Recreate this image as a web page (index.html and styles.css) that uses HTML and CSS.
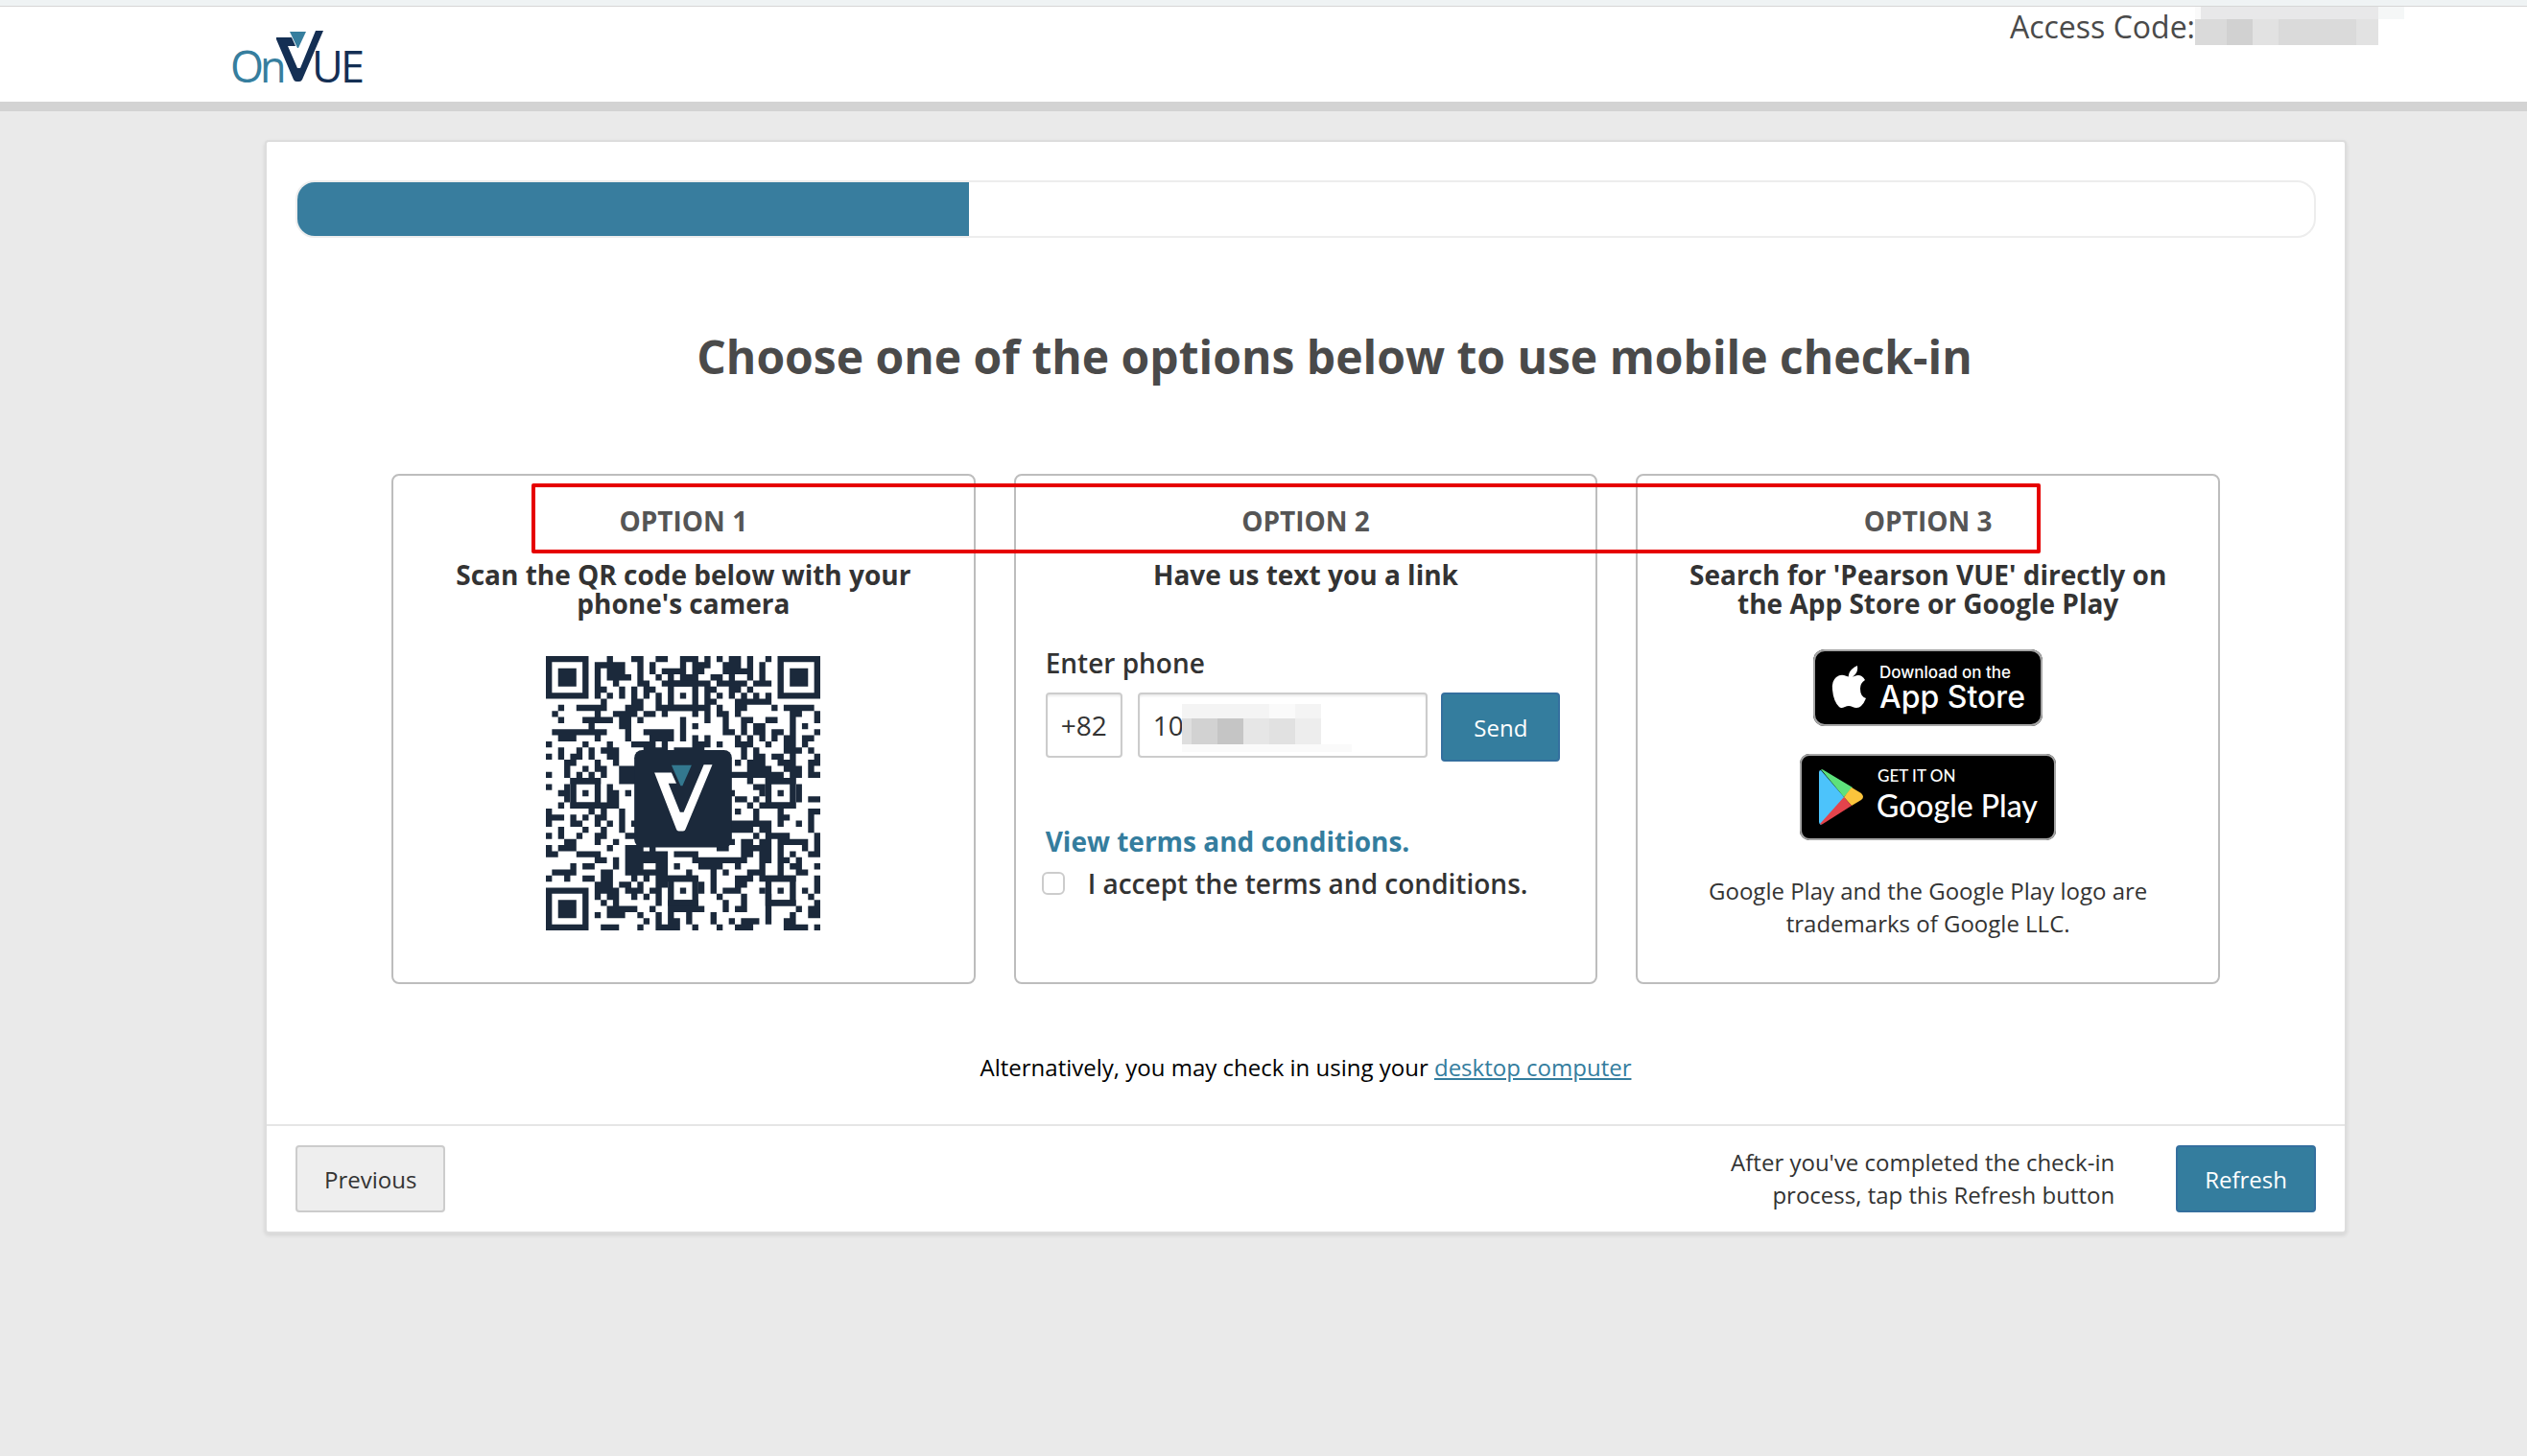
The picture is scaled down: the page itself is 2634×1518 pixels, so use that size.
FILE: index.html
```html
<!DOCTYPE html>
<html lang="en">
<head>
  <meta charset="UTF-8" />
  <meta name="viewport" content="width=device-width, initial-scale=1" />
  <title>OnVUE Check-in</title>
  <link rel="stylesheet" href="styles.css">
</head>
<body>
  <header class="header">
    <svg class="logo" viewBox="0 0 140 76" role="img" aria-label="OnVUE">
      <g class="logo-text">
        <text class="logo-on" x="-2" y="64">O</text>
        <text class="logo-on" x="29" y="64">n</text>
        <text x="83" y="64">U</text>
        <text x="113" y="64">E</text>
      </g>
      <path fill="#142f54" d="M46 17h16l4 9h-8l10 23h3L87 10h8L73 61q-1 2-3 2h-3q-2 0-3-2L46 19z" />
      <path fill="#367e9e" d="M60 11h17l-8 17h-1z" />
    </svg>
    <div class="access-code">
      <span>Access Code:</span>
      <svg class="code-mask" viewBox="0 0 218 40" shape-rendering="crispEdges" aria-hidden="true">
        <path fill="#fafafa" d="M0 0h6v13H0z" />
        <path fill="#e8e8e9" d="M6 0h185v13H6z" />
        <path fill="#f5f7f7" d="M191 0h27v13h-27z" />
        <path fill="#dadada" d="M0 13h191v27H0z" />
        <path fill="#d1d1d1" d="M33 13h27v27H33z" />
        <path fill="#e2e2e2" d="M60 13h27v27H60zM168 13h23v27h-23z" />
      </svg>
    </div>
  </header>

  <main class="panel">
    <div class="content">
      <div class="progress" role="progressbar" aria-label="Check-in progress" aria-valuenow="33" aria-valuemin="0" aria-valuemax="100">
        <div class="progress-fill" style="width: 33.3%"></div>
      </div>

      <h1>Choose one of the options below to use mobile check-in</h1>

      <div class="options">
        <section class="option">
          <h2>OPTION 1</h2>
          <h3>Scan the QR code below with your phone's camera</h3>
          <svg class="qr" viewBox="0 0 45 45" role="img" aria-label="QR code">
            <g id="qrModules" stroke="#1b293b"></g>
            <g fill="none" stroke="#1b293b">
              <path d="M.5 .5h6v6h-6zM38.5 .5h6v6h-6zM.5 38.5h6v6h-6z" />
              <path d="M20.5 4.5h4v4h-4zM4.5 20.5h4v4h-4zM36.5 20.5h4v4h-4zM20.5 36.5h4v4h-4zM36.5 36.5h4v4h-4z" />
            </g>
            <path fill="#1b293b" d="M2 2h3v3H2zM40 2h3v3h-3zM2 40h3v3H2zM22 6h1v1h-1zM6 22h1v1H6zM38 22h1v1h-1zM22 38h1v1h-1zM38 38h1v1h-1z" />
            <rect x="14.5" y="15.4" width="16" height="16" rx="1.3" fill="#1b293b" />
            <path fill="#fff" d="M17.8 19.1h2.8l.8 1.8h-1.3l1.9 4.7h.6l3.3-7.8h1.4L22.9 28.4q-.1.3-.4.3h-.7q-.3 0-.4-.3z" />
            <path fill="#33788f" d="M20.6 17.9h3.3l-1.5 3.4h-.3z" />
          </svg>
        </section>

        <section class="option">
          <h2>OPTION 2</h2>
          <h3>Have us text you a link</h3>
          <form class="phone-form" id="phoneForm">
            <label for="phone">Enter phone</label>
            <div class="phone-row">
              <input type="text" class="country" aria-label="Country code" value="+82" />
              <div class="phone-box">
                <input type="text" id="phone" value="10" />
                <svg class="phone-mask" viewBox="0 0 177 50" shape-rendering="crispEdges" aria-hidden="true">
                  <path fill="#f4f4f4" d="M0 0h145v15H0z" />
                  <path fill="#fafafa" d="M91 0h27v15H91zM0 42h177v8H0z" />
                  <path fill="#dedede" d="M0 15h10v27H0z" />
                  <path fill="#d2d2d2" d="M10 15h27v27H10z" />
                  <path fill="#c5c5c5" d="M37 15h27v27H37z" />
                  <path fill="#e6e6e6" d="M64 15h27v27H64z" />
                  <path fill="#e1e1e1" d="M91 15h27v27H91z" />
                  <path fill="#ededed" d="M118 15h27v27h-27z" />
                </svg>
              </div>
              <button type="submit" class="btn btn-primary send">Send</button>
            </div>
            <a href="#" class="terms-link">View terms and conditions.</a>
            <div class="accept">
              <input type="checkbox" id="accept" />
              <label for="accept">I accept the terms and conditions.</label>
            </div>
          </form>
        </section>

        <section class="option">
          <h2>OPTION 3</h2>
          <h3>Search for 'Pearson VUE' directly on the App Store or Google Play</h3>
          <div class="badges">
            <a href="#" class="badge app-store" aria-label="Download on the App Store">
              <svg viewBox="0 0 239 80">
                <path fill="#fff" d="M46 17q1 6-3 10-3 3-6 3-1-5 3-9 3-3 6-4zM54 32q-5 3-5 9 0 8 6 10-2 5-5 8-2 2-5 2-2 0-4-1-4-2-8 0-4 2-6 0-6-6-7-18-1-9 4-13 4-3 8-2l6 2q2 0 5-1 7-3 11 4z" />
                <text class="badge-small apple-small" x="69" y="30">Download on the</text>
                <text class="badge-large apple-large" x="69" y="61">App Store</text>
              </svg>
            </a>
            <a href="#" class="badge google-play" aria-label="Get it on Google Play">
              <svg viewBox="0 0 267 90">
                <path fill="#4cc3fb" d="M20 19q0-2 2-2l25 29-25 28q-2-1-2-3z" />
                <path fill="#5de17c" d="M22 16q2 0 3 1l30 18-9 10z" />
                <path fill="#fbc43c" d="M54 35l10 6q4 4 0 7l-10 6-8-9z" />
                <path fill="#e4434c" d="M46 45l8 9-30 19q-2 1-3 0z" />
                <text class="badge-small google-small" x="81" y="29">GET IT ON</text>
                <text class="badge-large google-large" x="80" y="66">Google Play</text>
              </svg>
            </a>
          </div>
          <p class="trademark">Google Play and the Google Play logo are trademarks of Google LLC.</p>
        </section>

        <div class="highlight"></div>
      </div>

      <p class="alternative">Alternatively, you may check in using your <a href="#">desktop computer</a></p>
    </div>

    <footer class="footer">
      <button type="button" class="btn btn-default">Previous</button>
      <div class="footer-right">
        <p>After you've completed the check-in process, tap this Refresh button</p>
        <button type="button" class="btn btn-primary">Refresh</button>
      </div>
    </footer>
  </main>

  <script>
    // dark runs of each QR row, "start" or "start-end"
    const qrRows = [
      '10 14-15 18-19 22-24 26 28 30-31 33 36',
      '8-12 15 17 22 24-26 29-31 33 35',
      '8 10-12 15 17 19-22 24-25 29-31 32-33 35',
      '8 10-13 15 18 20 22-24 27-28 30 33 35',
      '8 11 15-16 19-26 28-31 32 34-36',
      '8-9 12 14 16-17 26-27 30-31 33',
      '8 10 12 14 16 18 26 28 30 32 34 36',
      '9 14-15 18 26-27 31-36',
      '2 5-9 13-15 18-26 28 31-32 37 39-43',
      '1 8 11-14 16-17 19 24 26 28-29 31 40-41 44',
      '2 6-10 12-13 15 22 26 29 32-33 36-37 40 44',
      '7 12-13 22 24 29 32 34-35 40 42',
      '1-9 13 16-20 22 29-30 32 34-35 37-38 40 44',
      '2-4 8 13 17-20 22 24 26 31 33 35 37 39-40 42-43',
      '0 6 10 14-17 19 24-26 28 31-33 36 39-40 42',
      '2 5 7 9-11 16-19 21-25 32 34 39-41 43',
      '0 2 4-5 7 10-11 32 34-35 37-38 40 44',
      '3-4 8 11 31 33-35 38-40 43-44',
      '3 6 8-9 12-14 33-36 39-41 43',
      '0 3 5 7 9 12-14 30-38 40-41 43-44',
      '4-8 12-14 33 36-40',
      '0 3 10 34-35 41',
      '2-3 10-11 13 30 35 41',
      '3 10-11 31-32 34 41 43-44',
      '2 4-11 33 35-40',
      '0 7 9 12 31 34 38 43-44',
      '0-2 4 6 8-9 12 34 38-39 43',
      '0 4-5 8 10 12 14 30-36 38 41 43',
      '2 6 9 12 30-33 35-36 43',
      '0 2 5 8-9 13-14 34 36-39 44',
      '3-4 8 11 30 32-33 35-36 38-42 44',
      '0 2-4 10 13-15 17 28-29 32-36 38 42 44',
      '0-1 5-8 13-19 21-24 32-33 35-36 38 40 43-44',
      '8-9 11 13-19 24-32 35-36 38-39 41',
      '4 6-7 11 13-15 18-19 21 25-28 31 35 38 40-41 44',
      '1-4 9-10 13-19 23 27 29 33-35 38 41-42',
      '0 3 6-7 9-10 14 16 18-24 27 31-33 35-40 44',
      '8-10 12-13 15 18-19 25 27 31-32 44',
      '8-11 13-15 17-18 25 27 29-31 35 42 44',
      '8 10-11 14 16 18 28 32 36 43',
      '9 11 18 20-24 29 32 36-40 44',
      '10-14 17 20-25 29 31-32 36 41 43-44',
      '8 10-12 15 18 20 23 27 36 40 43-44',
      '16 18 20-21 23 27 30 32-34 36 39-40',
      '9-11 15 18-21 24 28 31-33 39-42 44'
    ];

    let qrPath = '';
    qrRows.forEach((row, y) => {
      row.split(' ').forEach((run) => {
        const [start, end = start] = run.split('-').map(Number);
        qrPath += `M${start} ${y + 0.5}h${end - start + 1}`;
      });
    });
    document.getElementById('qrModules').innerHTML = `<path d="${qrPath}" />`;

    document.getElementById('phoneForm').addEventListener('submit', (e) => e.preventDefault());
  </script>
</body>
</html>
```
FILE: styles.css
```css
* {
  box-sizing: border-box;
}

body {
  font-family: 'Open Sans', 'Noto Sans', sans-serif;
  font-size: 24px;
  line-height: 34px;
  background-color: #eaeaea;
  color: #333;
  margin: 0;
  border-top: 6px solid #eff3f4;
}

h1, h2, h3, p {
  margin: 0;
}

a {
  color: #347d9e;
}

.header {
  display: flex;
  justify-content: space-between;
  align-items: flex-start;
  height: 110px;
  padding: 0 128px 0 242px;
  background-color: #fff;
  border-top: 1px solid #d6d6d6;
  border-bottom: 10px solid #d3d3d3;
}

.logo {
  width: 140px;
  height: 76px;
  margin-top: 15px;
  overflow: visible;
}

.logo-text {
  font-size: 45px;
  font-weight: 400;
  fill: #142f54;
}

.logo-on {
  fill: #367e9e;
}

.access-code {
  display: flex;
  font-size: 32px;
  line-height: 42px;
  color: #4a4a4a;
}

.code-mask {
  width: 218px;
  height: 40px;
}

.panel {
  margin: 30px 188px 60px 276px;
  background-color: #fff;
  border: 2px solid #ddd;
  border-radius: 4px;
  box-shadow: 0 2px 4px rgba(0, 0, 0, 0.1);
}

.content {
  padding: 40px 30px 42px;
}

.progress {
  height: 60px;
  border: 2px solid #ededed;
  border-radius: 20px;
  overflow: hidden;
}

.progress-fill {
  height: 100%;
  background-color: #387d9e;
}

h1 {
  margin: 92px 0 90px;
  padding-left: 60px;
  font-size: 48px;
  line-height: 64px;
  text-align: center;
  color: #4a4a4a;
}

/* Option cards */
.options {
  position: relative;
  display: grid;
  grid-template-columns: repeat(3, 1fr);
  gap: 40px;
  padding: 0 100px;
}

.option {
  display: flex;
  flex-direction: column;
  align-items: center;
  padding: 32px 31px 44px;
  border: 2px solid #bdbdbd;
  border-radius: 8px;
  text-align: center;
}

h2, h3 {
  font-size: 28px;
  line-height: 30px;
}

h2 {
  color: #555;
  margin-bottom: 26px;
}

/* Frame drawn over the option titles */
.highlight {
  position: absolute;
  top: 10px;
  left: 246px;
  right: 287px;
  height: 73px;
  border: 4px solid #e60000;
  border-radius: 2px;
  pointer-events: none;
}

.qr {
  width: 286px;
  height: 286px;
  margin-top: 40px;
}

.phone-form {
  width: 100%;
  margin-top: 62px;
  text-align: left;
}

.phone-form label,
.terms-link {
  display: block;
  font-size: 28px;
  line-height: 30px;
  font-weight: 600;
}

.phone-row {
  display: flex;
  align-items: flex-start;
  margin: 16px 0 68px;
}

.phone-row input {
  width: 100%;
  height: 68px;
  padding: 0 14px;
  border: 2px solid #ccc;
  border-radius: 4px;
  box-shadow: inset 0 2px 2px rgba(0, 0, 0, 0.08);
  font-family: inherit;
  font-size: 28px;
  color: #333;
}

.phone-row .country {
  width: 80px;
  padding: 0;
  text-align: center;
}

.phone-box {
  position: relative;
  flex: 1;
  margin: 0 14px 0 16px;
}

.phone-mask {
  position: absolute;
  top: 12px;
  left: 46px;
  width: 177px;
  height: 50px;
}

.terms-link {
  font-weight: 700;
  text-decoration: none;
}

.accept {
  display: flex;
  align-items: center;
  gap: 24px;
  margin: 14px 0 0 -4px;
}

.accept input {
  appearance: none;
  width: 24px;
  height: 24px;
  margin: 0;
  border: 2px solid #ccc;
  border-radius: 6px;
}

.btn {
  height: 70px;
  padding: 0 28px;
  border: 2px solid #ccc;
  border-radius: 4px;
  font-family: inherit;
  font-size: 24px;
  cursor: pointer;
}

.btn-default {
  background-color: #eee;
  color: #333;
}

.btn-primary {
  background-color: #347d9e;
  border-color: #346f9e;
  color: #fff;
}

.send {
  width: 124px;
  height: 72px;
  margin-right: 6px;
}

/* Store badges */
.badges {
  display: flex;
  flex-direction: column;
  align-items: center;
  gap: 29px;
  margin: 33px 0 36px;
}

.badge {
  background-color: #000;
  border-radius: 12px;
  box-shadow: inset 0 0 0 2px #a6a6a6;
}

.badge svg {
  display: block;
}

.badge text {
  fill: #fff;
}

.app-store {
  width: 239px;
  height: 80px;
}

.google-play {
  width: 267px;
  height: 90px;
  border-radius: 10px;
}

.badge-small,
.badge-large {
  font-family: Inter, sans-serif;
  font-weight: 500;
}

.apple-small {
  font-size: 17px;
}

.apple-large {
  font-size: 32px;
}

.google-small {
  font-family: Lato, sans-serif;
  font-size: 17px;
}

.google-large {
  font-family: Lato, sans-serif;
  font-size: 32px;
}

.trademark {
  max-width: 480px;
}

.alternative {
  margin-top: 70px;
  text-align: center;
  color: #000;
}

/* Footer */
.footer {
  display: flex;
  justify-content: space-between;
  align-items: center;
  padding: 20px 30px;
  border-top: 2px solid #e6e6e6;
}

.footer-right {
  display: flex;
  align-items: center;
  gap: 64px;
}

.footer-right p {
  max-width: 410px;
  text-align: right;
}
```
